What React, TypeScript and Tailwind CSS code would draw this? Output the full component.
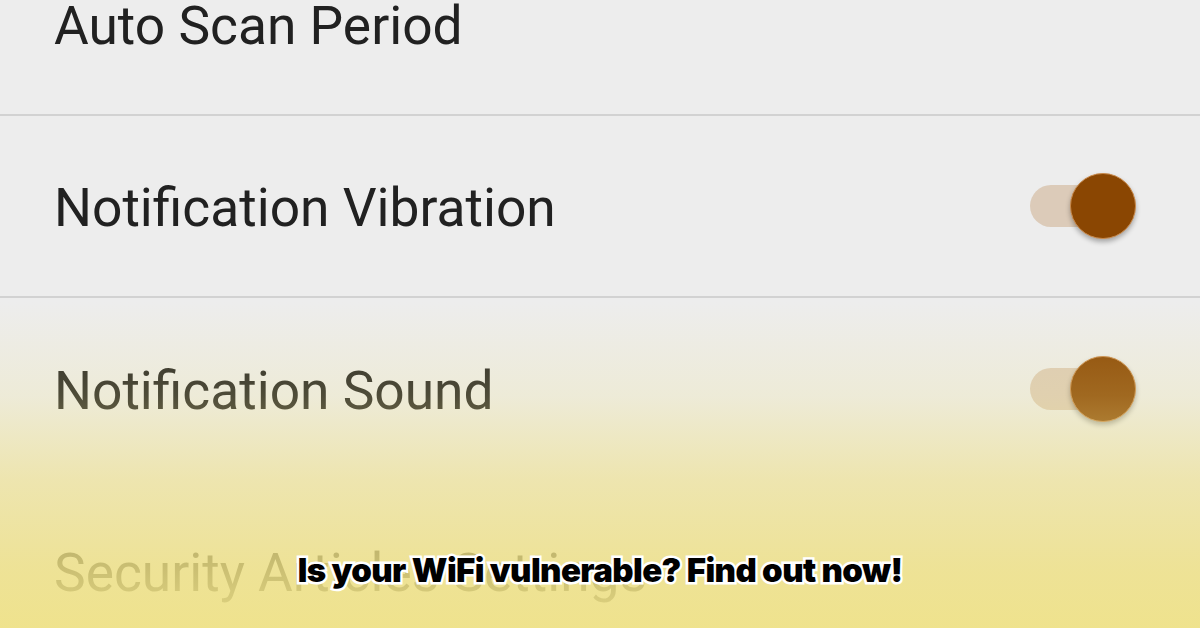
const rows = [
  { label: 'Auto Scan Period' },
  { label: 'Notification Vibration', toggle: true },
  { label: 'Notification Sound', toggle: true },
  { label: 'Security Articles Settings' },
];

const Toggle = () => (
  <div className="relative w-[106px] h-[70px] flex items-center">
    <div className="w-[78px] h-[42px] rounded-full bg-[#dccbb9]" />
    <div className="absolute right-0 top-[2px] w-[66px] h-[66px] rounded-full bg-[#8a4602] border border-[#c98a4c] shadow-[0_3px_5px_rgba(0,0,0,0.3)]" />
  </div>
);

const App = () => {
  return (
    <div className="relative w-[1200px] h-[628px] overflow-hidden bg-[#ededed] font-['Roboto',sans-serif]">
      <div className="flex flex-col -mt-[66px]">
        {rows.map((row, i) => (
          <div
            key={row.label}
            className={`flex items-center justify-between h-[182px] pl-[54px] pr-[64px] ${i < 2 ? 'border-b-2 border-[#d2d2d2]' : ''}`}
          >
            <span className="text-[53.3px] text-[#212121] pt-[6px]">{row.label}</span>
            {row.toggle && <Toggle />}
          </div>
        ))}
      </div>

      <div className="absolute inset-0 bg-[linear-gradient(to_bottom,rgba(239,227,140,0)_48%,rgba(239,227,140,0.22)_63%,rgba(238,224,135,0.6)_76%,rgba(238,224,132,0.82)_90%,rgba(239,226,136,0.95)_100%)]" />

      <div className="absolute left-0 right-0 top-[546px] flex justify-center">
        <span className="font-['Inter',sans-serif] font-black text-[33px] text-black tracking-[-0.6px] [paint-order:stroke_fill] [-webkit-text-stroke:5px_white]">
          Is your WiFi vulnerable? Find out now!
        </span>
      </div>
    </div>
  );
};

export default App;
